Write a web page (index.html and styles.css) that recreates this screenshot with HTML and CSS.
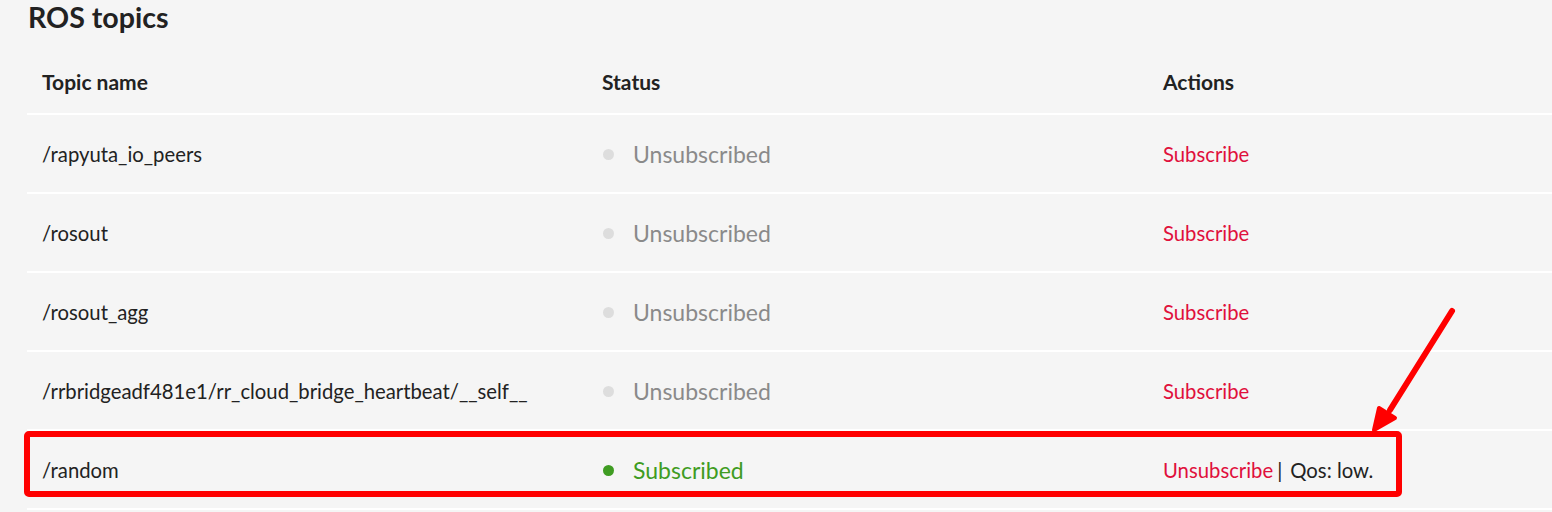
FILE: index.html
```html
<!DOCTYPE html>
<html>
<head>
<meta charset="utf-8">
<link rel="stylesheet" href="styles.css">
</head>
<body>
<div class="page">
  <h1 class="title">ROS topics</h1>
  <div class="table-wrap">
    <table class="topics">
      <colgroup>
        <col class="c1">
        <col class="c2">
        <col class="c3">
      </colgroup>
      <thead>
        <tr>
          <th>Topic name</th>
          <th>Status</th>
          <th>Actions</th>
        </tr>
      </thead>
      <tbody>
        <tr>
          <td>/rapyuta_io_peers</td>
          <td><span class="status off"><span class="dot"></span>Unsubscribed</span></td>
          <td><a class="link">Subscribe</a></td>
        </tr>
        <tr>
          <td>/rosout</td>
          <td><span class="status off"><span class="dot"></span>Unsubscribed</span></td>
          <td><a class="link">Subscribe</a></td>
        </tr>
        <tr>
          <td>/rosout_agg</td>
          <td><span class="status off"><span class="dot"></span>Unsubscribed</span></td>
          <td><a class="link">Subscribe</a></td>
        </tr>
        <tr>
          <td>/rrbridgeadf481e1/rr_cloud_bridge_heartbeat/__self__</td>
          <td><span class="status off"><span class="dot"></span>Unsubscribed</span></td>
          <td><a class="link">Subscribe</a></td>
        </tr>
        <tr>
          <td>/random</td>
          <td><span class="status on"><span class="dot"></span>Subscribed</span></td>
          <td><a class="link">Unsubscribe</a><span class="sep">|</span><span class="qos">Qos: low.</span></td>
        </tr>
      </tbody>
    </table>
  </div>
  <div class="highlight"></div>
  <svg class="arrow" width="120" height="140" viewBox="0 0 120 140">
    <line x1="92" y1="11" x2="30" y2="110" stroke="#ff0000" stroke-width="6" stroke-linecap="round"/>
    <polygon points="14,130 19,108 35,118" fill="#ff0000" stroke="#ff0000" stroke-width="4" stroke-linejoin="round"/>
  </svg>
</div>
</body>
</html>
```

FILE: styles.css
```css
html, body {
  margin: 0;
  padding: 0;
  background: #f5f5f5;
}
body {
  font-family: "Lato", "Liberation Sans", sans-serif;
  color: #222;
  overflow: hidden;
  width: 1552px;
  height: 512px;
}
.page {
  position: relative;
  padding: 0 0 0 27px;
}
.title {
  margin: 0;
  padding: 0 0 0 1px;
  font-size: 28.6px;
  font-weight: 700;
  line-height: 34px;
  color: #222;
}
.table-wrap {
  margin-top: 11px;
}
.topics {
  border-collapse: collapse;
  table-layout: fixed;
  width: 1525px;
}
.c1 { width: 560px; }
.c2 { width: 561px; }
.topics th {
  text-align: left;
  font-size: 21px;
  font-weight: 700;
  height: 64px;
  padding: 4px 15px 0;
  border-bottom: 2px solid #ffffff;
  color: #222;
}
.topics td {
  height: 77px;
  padding: 0 15px;
  font-size: 20.3px;
  border-bottom: 2px solid #ffffff;
  color: #222;
}
.status {
  display: inline-flex;
  align-items: center;
  font-size: 23px;
}
.status .dot {
  width: 11px;
  height: 11px;
  border-radius: 50%;
  margin: 2px 19px 0 1px;
}
.status.off { color: #8a8a8a; }
.status.off .dot { background: #dddddd; }
.status.on { color: #3f9c22; }
.status.on .dot { background: #3f9c22; }
.link {
  color: #e0103c;
  text-decoration: none;
}
.sep {
  color: #222;
  margin: 0 8px 0 4px;
}
.qos { color: #222; }
.highlight {
  position: absolute;
  left: 24px;
  top: 431px;
  width: 1366px;
  height: 54px;
  border: 6px solid #ff0000;
  border-radius: 5px;
}
.arrow {
  position: absolute;
  left: 1360px;
  top: 300px;
}
```
